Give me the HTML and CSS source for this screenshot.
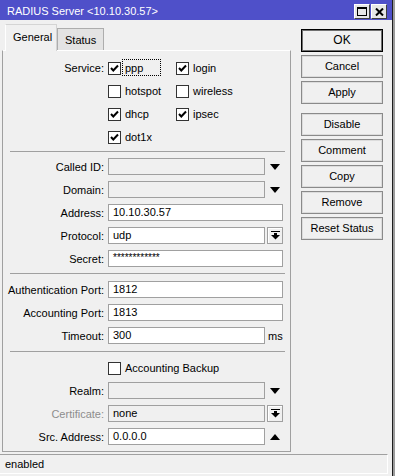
FILE: index.html
```html
<!DOCTYPE html>
<html lang="en">
<head>
  <meta charset="UTF-8">
  <title>RADIUS Server</title>
  <link rel="stylesheet" href="styles.css">
</head>
<body>
  <div class="window">
    <!-- title bar -->
    <div class="titlebar">
      <span class="title">RADIUS Server &lt;10.10.30.57&gt;</span>
      <div class="title-btns">
        <span class="tb-btn">
          <svg width="10" height="9" viewBox="0 0 10 9"><rect x="0.5" y="0.5" width="9" height="8" fill="none" stroke="#000"/><rect x="0" y="0" width="10" height="2" fill="#000"/></svg>
        </span>
        <span class="tb-btn">
          <svg width="9" height="8" viewBox="0 0 9 8"><path d="M1 0.5 L8 7.5 M8 0.5 L1 7.5" stroke="#000" stroke-width="2"/></svg>
        </span>
      </div>
    </div>

    <div class="main">
      <div class="left">
        <div class="tabs">
          <div class="tab active">General</div>
          <div class="tab">Status</div>
        </div>

        <div class="panel">
          <!-- services -->
          <div class="group services">
            <div class="service-grid">
              <span class="lbl">Service:</span>
              <span class="check-item"><span class="checkbox on"></span><span class="check-lbl focus">ppp</span></span>
              <span class="check-item"><span class="checkbox on"></span><span class="check-lbl">login</span></span>

              <span></span>
              <span class="check-item"><span class="checkbox"></span><span class="check-lbl">hotspot</span></span>
              <span class="check-item"><span class="checkbox"></span><span class="check-lbl">wireless</span></span>

              <span></span>
              <span class="check-item"><span class="checkbox on"></span><span class="check-lbl">dhcp</span></span>
              <span class="check-item"><span class="checkbox on"></span><span class="check-lbl">ipsec</span></span>

              <span></span>
              <span class="check-item"><span class="checkbox on"></span><span class="check-lbl">dot1x</span></span>
              <span></span>
            </div>
          </div>

          <div class="sep"></div>

          <div class="group g2">
            <div class="row">
              <span class="lbl">Called ID:</span>
              <span class="field empty"></span>
              <span class="aside"><span class="tri-down"></span></span>
            </div>
            <div class="row">
              <span class="lbl">Domain:</span>
              <span class="field empty"></span>
              <span class="aside"><span class="tri-down"></span></span>
            </div>
            <div class="row">
              <span class="lbl">Address:</span>
              <span class="field wide">10.10.30.57</span>
            </div>
            <div class="row">
              <span class="lbl">Protocol:</span>
              <span class="field">udp</span>
              <span class="aside"><span class="drop-btn">
                <svg width="9" height="9" viewBox="0 0 9 9"><rect x="0" y="0" width="9" height="1" fill="#000"/><rect x="3" y="2" width="3" height="3" fill="#000"/><polygon points="0,4 9,4 4.5,8.5" fill="#000"/></svg>
              </span></span>
            </div>
            <div class="row">
              <span class="lbl">Secret:</span>
              <span class="field wide secret">************</span>
            </div>
          </div>

          <div class="sep"></div>

          <div class="group g3">
            <div class="row">
              <span class="lbl">Authentication Port:</span>
              <span class="field wide">1812</span>
            </div>
            <div class="row">
              <span class="lbl">Accounting Port:</span>
              <span class="field wide">1813</span>
            </div>
            <div class="row">
              <span class="lbl">Timeout:</span>
              <span class="field">300</span>
              <span class="aside unit">ms</span>
            </div>
          </div>

          <div class="sep"></div>

          <div class="group g4">
            <div class="row">
              <span class="lbl"></span>
              <span class="check-item"><span class="checkbox"></span><span class="check-lbl">Accounting Backup</span></span>
            </div>
            <div class="row">
              <span class="lbl">Realm:</span>
              <span class="field empty"></span>
              <span class="aside"><span class="tri-down"></span></span>
            </div>
            <div class="row">
              <span class="lbl disabled">Certificate:</span>
              <span class="field empty">none</span>
              <span class="aside"><span class="drop-btn">
                <svg width="9" height="9" viewBox="0 0 9 9"><rect x="0" y="0" width="9" height="1" fill="#000"/><rect x="3" y="2" width="3" height="3" fill="#000"/><polygon points="0,4 9,4 4.5,8.5" fill="#000"/></svg>
              </span></span>
            </div>
            <div class="row">
              <span class="lbl">Src. Address:</span>
              <span class="field">0.0.0.0</span>
              <span class="aside"><span class="tri-up"></span></span>
            </div>
          </div>
        </div>
      </div>

      <!-- action buttons -->
      <div class="buttons">
        <div class="btn default">OK</div>
        <div class="btn">Cancel</div>
        <div class="btn">Apply</div>
        <div class="btn spaced">Disable</div>
        <div class="btn">Comment</div>
        <div class="btn">Copy</div>
        <div class="btn">Remove</div>
        <div class="btn">Reset Status</div>
      </div>
    </div>

    <div class="statusbar">enabled</div>
  </div>
</body>
</html>
```

FILE: styles.css
```css
body {
  margin: 0;
  background: #9c9c9c;
  font-family: "Liberation Sans", Arial, sans-serif;
  font-size: 11px;
  color: #000;
}

.window {
  width: 392px;
  height: 476px;
  background: #f0f0f0;
  border-right: 1px solid #1e1e1e;
}

/* title bar */
.titlebar {
  height: 20px;
  background: #4f50c9;
  display: flex;
  align-items: center;
  justify-content: space-between;
  padding: 0 5px 0 7px;
}

.title {
  color: #fff;
  font-size: 11px;
  padding-top: 2px;
}

.title-btns {
  display: flex;
  gap: 1px;
  padding-top: 3px;
}

.tb-btn {
  width: 14px;
  height: 13px;
  background: #e6e6e6;
  border: 1px solid #fff;
  border-right-color: #404040;
  border-bottom-color: #404040;
  display: flex;
  align-items: center;
  justify-content: center;
}

/* main area */
.main {
  display: flex;
  padding-left: 2px;
}

.left {
  width: 289px;
}

.tabs {
  height: 30px;
  display: flex;
  align-items: flex-end;
  padding-left: 3px;
}

.tab {
  height: 22px;
  line-height: 22px;
  padding: 0 7px;
  background: #e3e3e3;
  border: 1px solid #adadad;
  border-bottom: none;
  box-sizing: border-box;
}

.tab.active {
  height: 27px;
  line-height: 25px;
  background: #f0f0f0;
  border-color: #d4d4d4;
  border-left-color: #fff;
  margin-bottom: -1px;
  position: relative;
  width: 52px;
  text-align: center;
}

.panel {
  border: 1px solid #a0a0a0;
  border-top-color: #fff;
  height: 402px;
  box-sizing: border-box;
}

.group {
  padding: 3px 0;
}

.group.services {
  padding: 5px 0 3px;
}

.group.g2 {
  padding: 3px 0 3px;
}

.group.g3 {
  padding: 4px 0 4px;
}

.group.g4 {
  padding: 4px 0 3px;
}

.sep {
  height: 1px;
  background: #a0a0a0;
  margin: 0 5px 0 7px;
}

.service-grid {
  display: grid;
  grid-template-columns: 105px 68px auto;
  grid-auto-rows: 23px;
  align-items: center;
}

.service-grid .lbl {
  width: auto;
}

.row {
  height: 23px;
  display: flex;
  align-items: center;
}

.lbl {
  width: 101px;
  margin-right: 4px;
  text-align: right;
  white-space: nowrap;
}

.lbl.disabled {
  color: #8d8d8d;
}

.check-item {
  display: flex;
  align-items: center;
}

.checkbox {
  width: 13px;
  height: 13px;
  box-sizing: border-box;
  border: 1px solid #333;
  background: #fff;
  flex: none;
  margin-top: 2px;
}

.checkbox.on {
  background: #fff url("data:image/svg+xml;utf8,<svg xmlns='http://www.w3.org/2000/svg' width='11' height='11'><path d='M2 5 L4.3 7.5 L9 2.5' stroke='black' stroke-width='2' fill='none'/></svg>") no-repeat center;
}

.check-lbl {
  margin-left: 1px;
  padding: 1px 2px;
  border: 1px dotted transparent;
  line-height: 12px;
}

.check-lbl.focus {
  border-color: #000;
  width: 33px;
  height: 14px;
  padding-top: 0;
  line-height: 16px;
}

.field {
  width: 157px;
  height: 17px;
  box-sizing: border-box;
  border: 1px solid #a0a0a0;
  background: #fff;
  padding-left: 4px;
  line-height: 15px;
  white-space: nowrap;
  overflow: hidden;
}

.field.wide {
  width: 175px;
}

.field.empty {
  background: #f0f0f0;
}

.field.secret {
  font-size: 10px;
  line-height: 14px;
}

.aside {
  width: 16px;
  margin-left: 2px;
  height: 17px;
  display: flex;
  align-items: center;
  justify-content: center;
}

.aside.unit {
  justify-content: flex-start;
  padding-left: 1px;
}

.tri-down {
  width: 0;
  height: 0;
  border-left: 5px solid transparent;
  border-right: 5px solid transparent;
  border-top: 6px solid #000;
}

.tri-up {
  width: 0;
  height: 0;
  border-left: 5px solid transparent;
  border-right: 5px solid transparent;
  border-bottom: 6px solid #000;
}

.drop-btn {
  width: 16px;
  height: 17px;
  box-sizing: border-box;
  border: 1px solid #a0a0a0;
  background: #f0f0f0;
  box-shadow: inset 1px 1px 0 #fff;
  display: flex;
  align-items: center;
  justify-content: center;
}

/* buttons */
.buttons {
  width: 82px;
  margin-left: 10px;
  padding-top: 9px;
  display: flex;
  flex-direction: column;
  gap: 3px;
}

.btn {
  height: 23px;
  box-sizing: border-box;
  border: 1px solid #8a8a8a;
  box-shadow: inset 0 0 0 1px #dcdcdc;
  background: #f0f0f0;
  text-align: center;
  line-height: 21px;
}

.btn.default {
  border-color: #000;
  box-shadow: inset 0 0 0 1px #707070;
  font-size: 12px;
}

.btn.spaced {
  margin-top: 6px;
}

/* status bar */
.statusbar {
  margin-top: 2px;
  width: 388px;
  height: 20px;
  box-sizing: border-box;
  border-top: 1px solid #a0a0a0;
  border-right: 1px solid #fff;
  border-bottom: 1px solid #fff;
  padding-left: 5px;
  line-height: 18px;
}
```
